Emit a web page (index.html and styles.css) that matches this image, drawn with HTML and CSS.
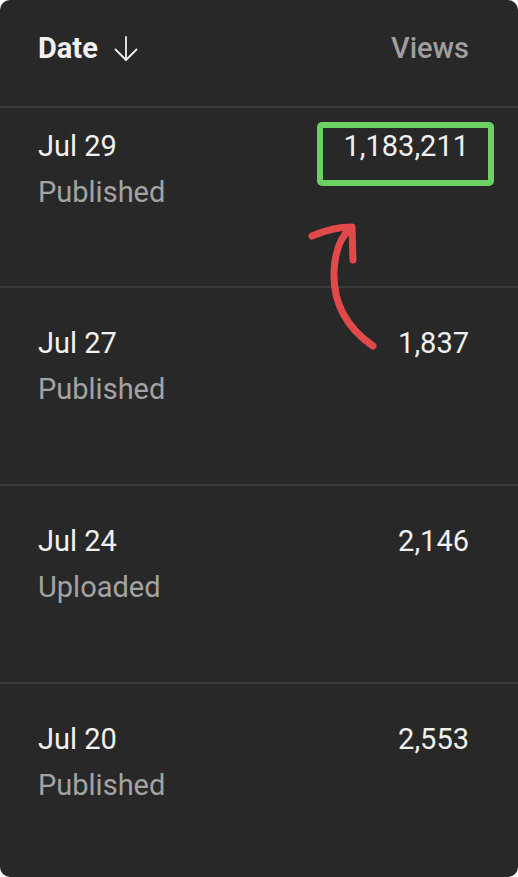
FILE: index.html
```html
<!DOCTYPE html>
<html lang="en">
<head>
  <meta charset="UTF-8">
  <meta name="viewport" content="width=device-width, initial-scale=1.0">
  <title>Content - Views</title>
  <link rel="stylesheet" href="styles.css">
</head>
<body>
  <div class="card">
    <header class="table-head">
      <div class="sort-col">
        <span>Date</span>
        <svg class="sort-icon" width="24" height="26" viewBox="0 0 24 26" fill="none" stroke="#f1f1f1" stroke-width="1.8" stroke-linecap="round" stroke-linejoin="round">
          <path d="M12 1 V24"/>
          <path d="M1.5 13.5 L12 24 L22.5 13.5"/>
        </svg>
      </div>
      <div class="views-col">Views</div>
    </header>

    <div class="row row-cut">
      <div class="info">
        <div class="date">Jul 29</div>
        <div class="status">Published</div>
      </div>
      <div class="views">1,183,211</div>
    </div>
    <div class="row">
      <div class="info">
        <div class="date">Jul 27</div>
        <div class="status">Published</div>
      </div>
      <div class="views">1,837</div>
    </div>
    <div class="row">
      <div class="info">
        <div class="date">Jul 24</div>
        <div class="status">Uploaded</div>
      </div>
      <div class="views">2,146</div>
    </div>
    <div class="row">
      <div class="info">
        <div class="date">Jul 20</div>
        <div class="status">Published</div>
      </div>
      <div class="views">2,553</div>
    </div>

    <!-- hand-drawn markup on top of the screenshot -->
    <svg class="markup" viewBox="0 0 518 877" fill="none" stroke-linecap="round" stroke-linejoin="round">
      <rect x="320" y="125" width="171" height="58" rx="2" stroke="#6bd163" stroke-width="6"/>
      <g stroke="#e24a4a" stroke-width="7">
        <path d="M373 346 C347 328 333 304 334 272 C335 250 341 236 351 228"/>
        <path d="M312 236 C326 230 339 227 352 227 L353 260"/>
      </g>
    </svg>
  </div>
</body>
</html>
```

FILE: styles.css
```css
html, body {
  margin: 0;
  padding: 0;
  background-color: #ffffff;
}
body {
  font-family: Roboto, "Noto Sans", Arial, sans-serif;
}
.card {
  position: relative;
  width: 518px;
  height: 877px;
  background-color: #282828;
  border-radius: 10px;
  overflow: hidden;
  color: #f1f1f1;
}
.table-head {
  box-sizing: border-box;
  height: 108px;
  padding: 31px 49px 0 38px;
  border-bottom: 2px solid #3b3b3b;
  display: flex;
  justify-content: space-between;
  align-items: flex-start;
  font-size: 29px;
  line-height: 34px;
}
.sort-col {
  display: flex;
  align-items: center;
  gap: 16px;
  font-weight: 700;
}
.sort-icon {
  margin-top: 2px;
}
.views-col {
  color: #9e9e9e;
  font-weight: 500;
}
.row {
  box-sizing: border-box;
  height: 198px;
  padding: 32px 49px 0 38px;
  border-bottom: 2px solid #3b3b3b;
  display: flex;
  justify-content: space-between;
  align-items: flex-start;
  font-size: 29px;
  line-height: 46px;
}
.row-cut {
  height: 180px;
  padding-top: 15px;
}
.date {
  color: #f1f1f1;
}
.status {
  color: #a3a3a3;
}
.views {
  color: #f1f1f1;
  text-align: right;
}
.markup {
  position: absolute;
  left: 0;
  top: 0;
  width: 518px;
  height: 877px;
  pointer-events: none;
}
```
